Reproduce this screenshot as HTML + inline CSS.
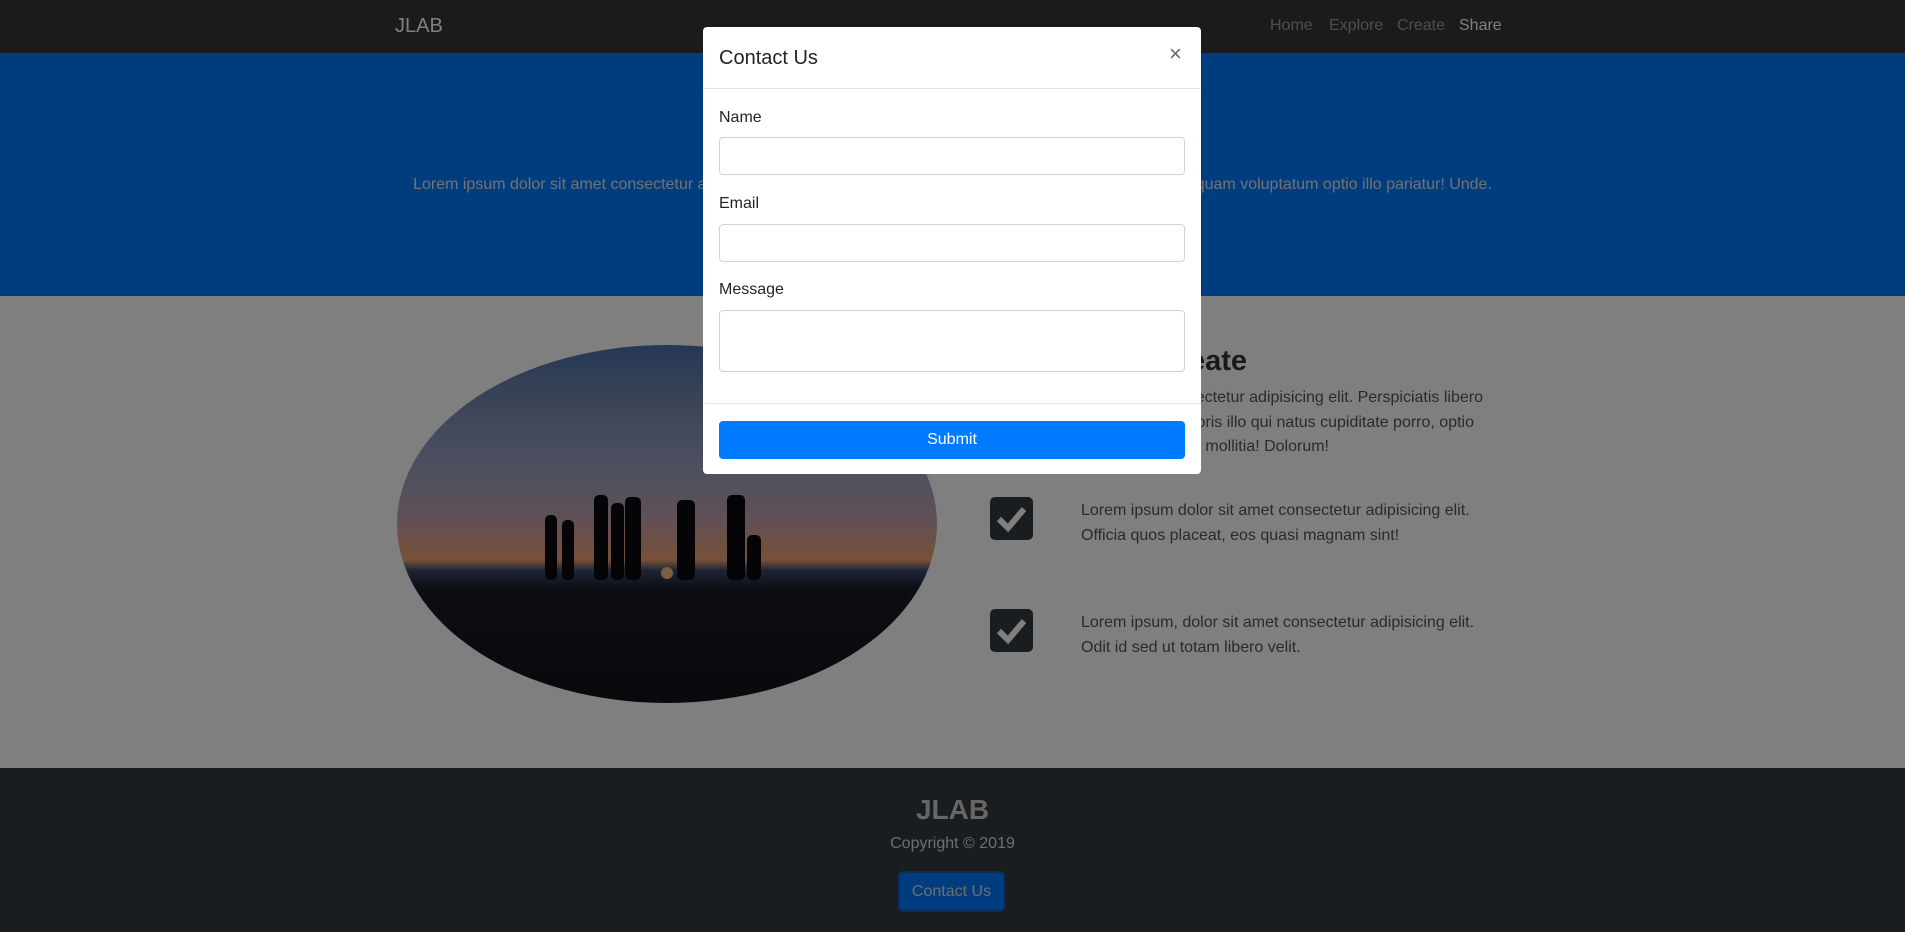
<!DOCTYPE html>
<html><head><meta charset="utf-8"><style>
*{box-sizing:border-box;margin:0;padding:0}
body{width:1905px;height:932px;overflow:hidden;position:relative;font-family:"Liberation Sans",sans-serif;background:#fff;color:#212529}
.abs{position:absolute}
nav{position:absolute;left:0;top:0;width:1905px;height:53px;background:#373737}
.brand{left:395px;top:15px;font-size:20px;color:#fff}
.nl{top:17px;font-size:16px;color:rgba(255,255,255,.5)}
.hero{top:53px;left:0;width:1905px;height:243px;background:#007bff}
.hero p{position:absolute;top:123px;left:0;width:1905px;text-align:center;color:#e4e4e4;font-size:16px;white-space:nowrap}
.sec{top:296px;left:0;width:1905px;height:472px;background:#fff}
.ell{left:397px;top:345px;width:540px;height:358px;border-radius:50%;overflow:hidden;background:linear-gradient(#4a6fa8 0%,#8090b0 20%,#9aa0c0 35%,#c0a0b0 48%,#f0a070 60%,#3b4a6a 63%,#1a1d2a 68%,#111318 100%)}
.chk{width:43px;height:43px;background:#343a40;border-radius:5px}
.t{font-size:16px;color:#555;white-space:nowrap;line-height:25px}
footer{position:absolute;top:768px;left:0;width:1905px;height:164px;background:#343a40}
.ov{left:0;top:0;width:1905px;height:932px;background:rgba(0,0,0,.5)}
.modal{left:703px;top:27px;width:498px;height:447px;background:#fff;border-radius:4px}
.lbl{font-size:16px;color:#212529;left:16px}
.inp{left:16px;width:466px;height:38px;border:1px solid #ced4da;border-radius:4px}
</style></head><body>
<nav><div class="abs brand">JLAB</div>
<div class="abs nl" style="left:1270px">Home</div>
<div class="abs nl" style="left:1329px">Explore</div>
<div class="abs nl" style="left:1397px">Create</div>
<div class="abs nl" style="left:1459px;color:#fff">Share</div></nav>
<div class="abs hero"><p>Lorem ipsum dolor sit amet consectetur adipisicing elit. Quos, quibusdam eaque ratione asperiores neque quisquam voluptatum optio illo pariatur! Unde.</p></div>
<div class="abs sec"></div>
<div class="abs ell">
<svg width="540" height="358" style="position:absolute;left:0;top:0">
<g fill="#0a0a0e">
<rect x="148" y="170" width="12" height="65" rx="5"/><rect x="165" y="175" width="12" height="60" rx="5"/>
<rect x="197" y="150" width="14" height="85" rx="5"/><rect x="214" y="158" width="13" height="77" rx="5"/>
<rect x="228" y="152" width="16" height="83" rx="5"/><rect x="280" y="155" width="18" height="80" rx="5"/>
<rect x="330" y="150" width="18" height="85" rx="5"/><rect x="350" y="190" width="14" height="45" rx="5"/>
</g><circle cx="270" cy="228" r="6" fill="#f0c080"/></svg></div>
<div class="abs" style="left:990px;top:345px;width:257px;text-align:right;font-size:29px;color:#333;font-weight:bold">Let's Create</div>
<div class="abs t" style="right:422px;top:385px">Lorem ipsum dolor sit amet consectetur adipisicing elit. Perspiciatis libero</div>
<div class="abs t" style="right:431px;top:410px">quas laboriosam fugiat laboris illo qui natus cupiditate porro, optio</div>
<div class="abs t" style="right:576px;top:434px">quaerat nemo mollitia! Dolorum!</div>
<div class="abs chk" style="left:990px;top:497px"><svg width="43" height="43"><path d="M9 22 L18 31 L34 12" stroke="#fff" stroke-width="6" fill="none"/></svg></div>
<div class="abs chk" style="left:990px;top:609px"><svg width="43" height="43"><path d="M9 22 L18 31 L34 12" stroke="#fff" stroke-width="6" fill="none"/></svg></div>
<div class="abs t" style="left:1081px;top:498px">Lorem ipsum dolor sit amet consectetur adipisicing elit.<br>Officia quos placeat, eos quasi magnam sint!</div>
<div class="abs t" style="left:1081px;top:610px">Lorem ipsum, dolor sit amet consectetur adipisicing elit.<br>Odit id sed ut totam libero velit.</div>
<footer>
<div class="abs" style="left:0;width:1905px;top:26px;text-align:center;font-size:28px;font-weight:bold;color:#ccc">JLAB</div>
<div class="abs" style="left:0;width:1905px;top:67px;text-align:center;font-size:16px;color:#ddd">Copyright © 2019</div>
<div class="abs" style="left:898px;top:103px;width:107px;height:41px;background:#007bff;border:2px solid #1c5fb0;border-radius:5px;color:#ddd;font-size:16px;text-align:center;line-height:37px">Contact Us</div>
</footer>
<div class="abs ov"></div>
<div class="abs modal">
<div class="abs" style="left:16px;top:20px;font-size:20px;color:#212529">Contact Us</div>
<div class="abs" style="left:466px;top:14px;font-size:22px;color:#666">×</div>
<div class="abs" style="left:0;top:61px;width:498px;height:1px;background:#dee2e6"></div>
<div class="abs lbl" style="top:82px">Name</div>
<div class="abs inp" style="top:110px"></div>
<div class="abs lbl" style="top:168px">Email</div>
<div class="abs inp" style="top:197px"></div>
<div class="abs lbl" style="top:254px">Message</div>
<div class="abs inp" style="top:283px;height:62px"></div>
<div class="abs" style="left:0;top:376px;width:498px;height:1px;background:#dee2e6"></div>
<div class="abs" style="left:16px;top:394px;width:466px;height:38px;background:#007bff;border-radius:4px;color:#fff;text-align:center;line-height:38px;font-size:16px">Submit</div>
</div>
</body></html>
